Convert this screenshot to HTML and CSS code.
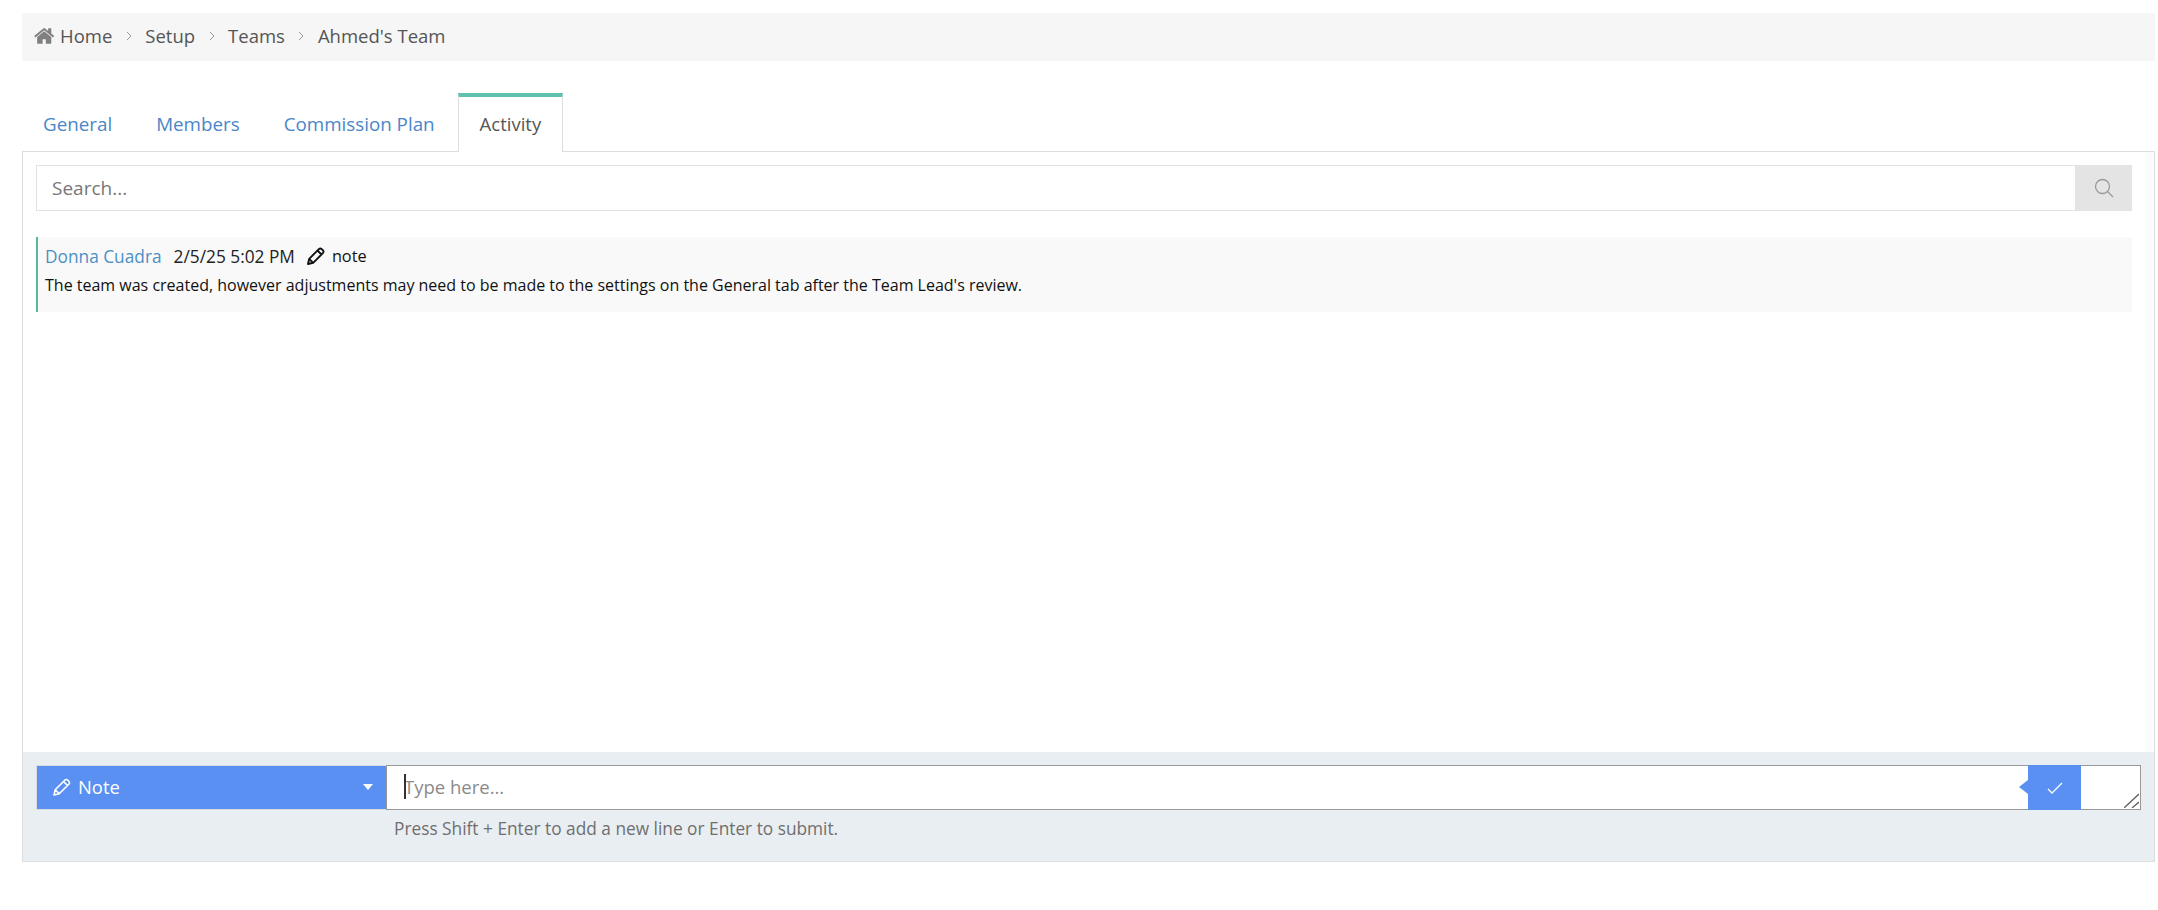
FILE: index.html
```html
<!DOCTYPE html>
<html lang="en">
<head>
<meta charset="utf-8">
<title>Ahmed's Team</title>
<link rel="stylesheet" href="styles.css">
</head>
<body>
<nav class="crumbs">
  <svg class="home" viewBox="0 0 1792 1792"><path d="M1408 992v480q0 26-19 45t-45 19h-384v-384h-256v384h-384q-26 0-45-19t-19-45v-480q0-1 .5-3t.5-3l575-474 575 474q1 2 1 6zm223-69l-62 74q-8 9-21 11h-3q-13 0-21-7l-692-577-692 577q-12 8-24 7-13-2-21-11l-62-74q-8-10-7-23.5t11-21.5l719-599q32-26 76-26t76 26l244 204v-195q0-14 9-23t23-9h192q14 0 23 9t9 23v408l219 182q10 8 11 21.5t-7 23.5z"/></svg>
  <span>Home</span>
  <svg class="sep" viewBox="0 0 8 12"><path d="M2 2l4 4-4 4"/></svg>
  <span>Setup</span>
  <svg class="sep" viewBox="0 0 8 12"><path d="M2 2l4 4-4 4"/></svg>
  <span>Teams</span>
  <svg class="sep" viewBox="0 0 8 12"><path d="M2 2l4 4-4 4"/></svg>
  <span>Ahmed's Team</span>
</nav>
<div class="tabs">
  <a class="tab">General</a>
  <a class="tab">Members</a>
  <a class="tab">Commission Plan</a>
  <a class="tab active">Activity</a>
</div>
<main class="panel">
  <div class="body">
    <div class="search">
      <div class="search-input">Search...</div>
      <div class="search-btn"><svg viewBox="0 0 20 20"><circle cx="8.5" cy="8.5" r="7"/><path d="M13.5 13.5l5.5 5.5"/></svg></div>
    </div>
    <article class="entry">
      <div class="meta">
        <a class="author">Donna Cuadra</a>
        <span>2/5/25 5:02 PM</span>
        <span class="kind"><svg class="pencil" viewBox="0 0 18 18"><path d="M1 17l1.200-5.200L11.800 2.200q1.500-1.400 3 0l1 1q1.400 1.500 0 3L6.200 15.800zM2.200 11.800l4 4M10.500 3.500l4 4"/></svg>note</span>
      </div>
      <p class="text">The team was created, however adjustments may need to be made to the settings on the General tab after the Team Lead's review.</p>
    </article>
  </div>
  <footer class="composer">
    <div class="composer-row">
      <div class="type">
        <svg class="pencil light" viewBox="0 0 18 18"><path d="M1 17l1.200-5.200L11.800 2.200q1.500-1.400 3 0l1 1q1.400 1.500 0 3L6.200 15.800zM2.200 11.800l4 4M10.500 3.500l4 4"/></svg>
        <span>Note</span>
        <i class="caret"></i>
      </div>
      <div class="input-wrap">
        <textarea class="input" placeholder="Type here..."></textarea>
        <i class="cursor"></i>
        <button class="submit"><svg viewBox="0 0 16 12"><path d="M1 7l4 4 10-10"/></svg></button>
        <svg class="grip" viewBox="0 0 15 15"><path d="M0 15L15 1M8 15l7-6"/></svg>
      </div>
    </div>
    <p class="hint">Press Shift + Enter to add a new line or Enter to submit.</p>
  </footer>
</main>
</body>
</html>
```
FILE: styles.css
```css
* { box-sizing: border-box; }
html, body { margin: 0; height: 100%; background: #fff; }
body {
  padding: 13px 3px 0 22px;
  font-family: "Open Sans", "Noto Sans", sans-serif;
  font-size: 18px;
  color: #555;
}
.crumbs {
  display: flex;
  align-items: center;
  height: 48px;
  padding: 0 0 3px 12px;
  background: #f6f6f6;
  font-size: 18.5px;
  color: #555;
}
.home { width: 22px; height: 22px; fill: #808080; margin-right: 4px; }
.sep { width: 8px; height: 12px; margin: 0 12.5px; fill: none; stroke: #999; stroke-width: 1; }
.tabs {
  display: flex;
  margin-top: 32px;
  margin-left: -1px;
  height: 58px;
  position: relative;
  z-index: 1;
}
.tab {
  display: flex;
  align-items: center;
  padding: 3px 22px 0;
  color: #4a86c7;
  font-size: 18.800px;
}
.active {
  color: #555;
  background: #fff;
  border: 1px solid #ddd;
  border-top: 4px solid #5fc2ae;
  border-bottom: 0;
  padding: 0 20.500px 3px;
  margin-bottom: -1px;
  margin-left: 1.500px;
  font-size: 18.500px;
}
.panel {
  border: 1px solid #ddd;
  height: 711px;
  display: flex;
  flex-direction: column;
}
.body { flex: 1; padding: 13px 22px 0 13px; background: linear-gradient(to right, #fff calc(100% - 9px), #fcfcfc calc(100% - 9px)); }
.search { display: flex; height: 46px; }
.search-input {
  flex: 1;
  display: flex;
  align-items: center;
  padding-left: 15px;
  border: 1px solid #e2e2e2;
  border-right: 0;
  font-size: 19px;
  color: #777;
}
.search-btn { width: 57px; background: #e4e4e4; display: flex; align-items: center; justify-content: center; }
.search-btn svg { width: 20px; height: 20px; fill: none; stroke: #999; stroke-width: 1.3; }
.entry {
  margin-top: 26px;
  height: 75px;
  padding: 7px 7px 0;
  background: #f9f9f9;
  border-left: 2px solid #58b89f;
  font-size: 16px;
  color: #222;
}
.meta { display: flex; align-items: center; height: 24px; gap: 12px; font-size: 17.300px; }
.author { color: #4b90c5; }
.kind { display: flex; align-items: center; gap: 7px; color: #111; font-size: 16.300px; }
.pencil { width: 18px; height: 18px; fill: none; stroke: #111; stroke-width: 1.900; stroke-linejoin: round; }
.pencil.light { stroke: #fff; stroke-width: 1.600; flex: none; }
.text { margin: 5px 0 0; color: #111; line-height: 24px; }
.composer {
  height: 109px;
  padding: 13px 13px 0 13px;
  background: #e9eef2;
}
.composer-row { display: flex; height: 45px; }
.type {
  flex: none;
  width: 350px;
  display: flex;
  align-items: center;
  gap: 7px;
  padding: 0 13px 2px 16px;
  background: #5990f2;
  border: 1px solid #d9dde2;
  border-right: 0;
  color: #fff;
  font-size: 18.400px;
}
.caret {
  margin-left: auto;
  border-left: 5.500px solid transparent;
  border-right: 5.500px solid transparent;
  border-top: 6px solid #fff;
}
.input-wrap { flex: 1; position: relative; display: flex; }
.input {
  flex: 1;
  display: block;
  margin: 0;
  height: 45px;
  padding: 9px 17px;
  border: 1px solid #999;
  border-radius: 0;
  outline: 0;
  resize: none;
  background: #fff;
  font: 18.500px/24px "Open Sans", "Noto Sans", sans-serif;
  color: #555;
}
.input::placeholder { color: #8a8a8a; opacity: 1; }
.cursor { position: absolute; left: 18px; top: 9px; width: 2px; height: 25px; background: #333; }
.grip { position: absolute; right: 2px; bottom: 2px; width: 15px; height: 15px; fill: none; stroke: #666; stroke-width: 1.400; }
.submit {
  position: absolute;
  top: 0;
  right: 60px;
  width: 53px;
  height: 45px;
  padding: 0;
  border: 0;
  background: #5990f2;
  display: flex;
  align-items: center;
  justify-content: center;
}
.submit::before {
  content: "";
  position: absolute;
  left: -9px;
  top: 15px;
  border-top: 7.500px solid transparent;
  border-bottom: 7.500px solid transparent;
  border-right: 9px solid #5990f2;
}
.submit svg { width: 16px; height: 12px; fill: none; stroke: #fff; stroke-width: 1.300; }
.hint { margin: 7px 0 0 358px; font-size: 17.300px; line-height: 24px; color: #6f6f6f; }
```
